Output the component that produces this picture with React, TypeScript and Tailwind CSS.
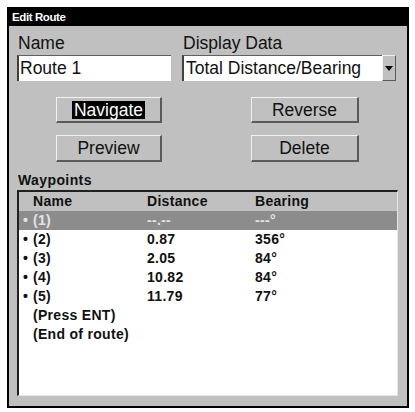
import React from "react";

const font = { fontFamily: '"Liberation Sans", Arial, sans-serif' };

function Btn({ children, highlight }: { children: React.ReactNode; highlight?: boolean }) {
  return (
    <div className="flex items-center justify-center w-full h-full bg-[#c0c0c0] border-t border-l border-t-[#f2f2f2] border-l-[#f2f2f2] border-b-2 border-r-2 border-b-[#5a5a5a] border-r-[#5a5a5a] text-[17.5px] leading-[18px] text-[#111]">
      {highlight ? <span className="bg-black text-white px-[2px] py-0">{children}</span> : <span>{children}</span>}
    </div>
  );
}

type Row = { name: string; dist: string; bear: string; bullet: boolean; sel?: boolean };

const rows: Row[] = [
  { name: "(1)", dist: "--.--", bear: "---°", bullet: true, sel: true },
  { name: "(2)", dist: "0.87", bear: "356°", bullet: true },
  { name: "(3)", dist: "2.05", bear: "84°", bullet: true },
  { name: "(4)", dist: "10.82", bear: "84°", bullet: true },
  { name: "(5)", dist: "11.79", bear: "77°", bullet: true },
  { name: "(Press ENT)", dist: "", bear: "", bullet: false },
  { name: "(End of route)", dist: "", bear: "", bullet: false },
];

export default function App() {
  return (
    <div className="bg-white w-[415px] h-[412px] pt-[7px] pl-[7px]" style={font}>
      <div className="w-[402px] h-[401px] border-2 border-black bg-[#c0c0c0] flex flex-col">
        <div className="h-[17px] bg-black text-white text-[11.5px] font-bold leading-[17px] pl-[3px] tracking-[-0.4px]">
          Edit Route
        </div>
        <div className="pl-[8px] pt-[7px] flex flex-col">
          <div className="flex">
            <div className="w-[154px] flex flex-col">
              <div className="pl-[1px] text-[17.5px] leading-[20px] text-[#111]">Name</div>
              <div className="mt-[2px] h-[26px] bg-white border-t border-l-2 border-t-[#606060] border-l-[#404040] text-[17.5px] leading-[24px] pl-[1px] text-[#111]">
                Route 1
              </div>
            </div>
            <div className="ml-[11px] w-[214px] flex flex-col">
              <div className="pl-[1px] text-[17.5px] leading-[20px] text-[#111]">Display Data</div>
              <div className="mt-[2px] h-[26px] flex">
                <div className="flex-1 bg-white border-t border-l-2 border-t-[#606060] border-l-[#404040] text-[17.5px] leading-[24px] pl-[2px] text-[#111] whitespace-nowrap overflow-hidden">
                  Total Distance/Bearing
                </div>
                <div className="w-[14px] bg-[#c0c0c0] border-t border-l border-t-[#f2f2f2] border-l-[#f2f2f2] border-b border-r border-b-[#5a5a5a] border-r-[#5a5a5a] flex items-center justify-center">
                  <svg width="8" height="5" viewBox="0 0 8 5">
                    <polygon points="0,0 8,0 4,5" fill="#000" />
                  </svg>
                </div>
              </div>
            </div>
          </div>

          <div className="flex mt-[16px] h-[26px]">
            <div className="ml-[39px] w-[106px]">
              <Btn highlight>Navigate</Btn>
            </div>
            <div className="ml-[89px] w-[108px]">
              <Btn>Reverse</Btn>
            </div>
          </div>
          <div className="flex mt-[12px] h-[27px]">
            <div className="ml-[39px] w-[106px]">
              <Btn>Preview</Btn>
            </div>
            <div className="ml-[89px] w-[108px]">
              <Btn>Delete</Btn>
            </div>
          </div>

          <div className="mt-[10px] pl-[1px] text-[14px] font-bold leading-[16px] tracking-[0.4px] text-[#111]">Waypoints</div>

          <div className="mt-[2px] w-[381px] h-[206px] bg-white border-t-2 border-l-2 border-t-[#202020] border-l-[#202020] border-b border-r border-b-[#e6e6e6] border-r-[#e6e6e6] flex flex-col text-[14px] font-bold tracking-[0.3px] text-[#111]">
            <div className="h-[19px] bg-[#c0c0c0] flex items-center leading-[19px]">
              <div className="w-[14px]" />
              <div className="w-[114px]">Name</div>
              <div className="w-[108px]">Distance</div>
              <div>Bearing</div>
            </div>
            {rows.map((r, i) => (
              <div
                key={i}
                className={
                  r.sel
                    ? "h-[19px] bg-[#8c8c8c] text-[#e4e4e4] flex items-center leading-[19px]"
                    : "h-[19px] flex items-center leading-[19px]"
                }
              >
                <div className="w-[14px] pl-[4px]">{r.bullet ? "•" : ""}</div>
                <div className="w-[114px] whitespace-nowrap">{r.name}</div>
                <div className="w-[108px]">{r.dist}</div>
                <div>{r.bear}</div>
              </div>
            ))}
          </div>
        </div>
      </div>
    </div>
  );
}
